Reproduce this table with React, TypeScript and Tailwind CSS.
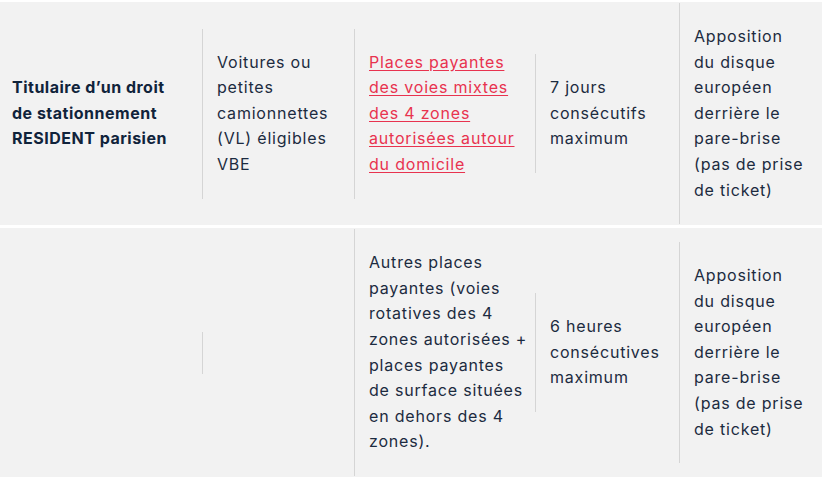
import React from "react"

const font = { fontFamily: "Inter, 'Open Sans', sans-serif" }

function Cell({
  children,
  w,
  textW,
  className = "",
}: {
  children?: React.ReactNode
  w: string
  textW: string
  className?: string
}) {
  return (
    <div className={`flex items-center self-stretch ${w}`}>
      <div className={`border-l border-[#d5d5d5] py-[21px] pl-[14px] ${className}`}>
        <div className={textW}>{children}</div>
      </div>
    </div>
  )
}

export default function App() {
  return (
    <div
      className="w-[824px] h-[481px] bg-white pt-[2px] pr-[2px] flex flex-col gap-[3px] text-[16px] leading-[25.6px] tracking-[0.8px] text-[#1c2b40]"
      style={font}
    >
      {/* Row 1 */}
      <div className="flex items-center bg-[#f2f2f2] py-px">
        <div className="w-[202px] pl-3 pr-[22px] font-bold tracking-[0.5px] text-[#10233b]">
          Titulaire d’un droit de stationnement RESIDENT parisien
        </div>
        <Cell w="w-[152px]" textW="w-[124px]">
          Voitures ou petites camionnettes (VL) éligibles VBE
        </Cell>
        <Cell w="w-[181px]" textW="w-[160px]">
          <a href="#" className="text-[#e8334f] underline underline-offset-2">
            Places payantes des voies mixtes des 4 zones autorisées autour du domicile
          </a>
        </Cell>
        <Cell w="w-[144px]" textW="w-[118px]">
          7 jours consécutifs maximum
        </Cell>
        <Cell w="w-[143px]" textW="w-[111px]">
          Apposition du disque européen derrière le pare-brise (pas de prise de ticket)
        </Cell>
      </div>

      {/* Row 2 */}
      <div className="flex items-center bg-[#f2f2f2] py-px">
        <div className="w-[202px] pl-3 pr-[22px]" />
        <Cell w="w-[152px]" textW="w-[124px]" />
        <Cell w="w-[181px]" textW="w-[160px]">
          Autres places payantes (voies rotatives des 4 zones autorisées + places payantes de surface situées en dehors des 4 zones).
        </Cell>
        <Cell w="w-[144px]" textW="w-[118px]">
          6 heures consécutives maximum
        </Cell>
        <Cell w="w-[143px]" textW="w-[111px]">
          Apposition du disque européen derrière le pare-brise (pas de prise de ticket)
        </Cell>
      </div>
    </div>
  )
}
